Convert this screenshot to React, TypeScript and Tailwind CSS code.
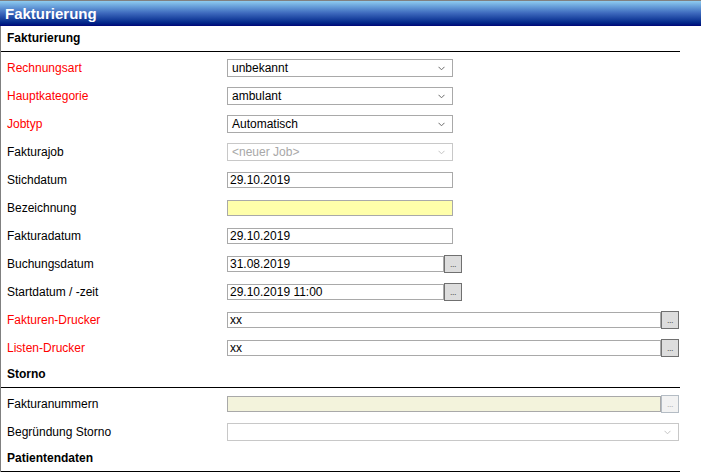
import React from "react";

const font = { fontFamily: '"Liberation Sans", Arial, sans-serif' };

function Chevron({ light }: { light?: boolean }) {
  return (
    <svg width="7" height="5" viewBox="0 0 7 5" className="shrink-0">
      <path d="M0.5 0.8 L3.5 3.8 L6.5 0.8" fill="none" stroke={light ? "#c4c4c4" : "#6a6a6a"} strokeWidth="1" />
    </svg>
  );
}

function Select({ value, disabled, wide }: { value: string; disabled?: boolean; wide?: boolean }) {
  return (
    <div
      className={`h-[18px] flex items-center justify-between pl-[4px] pr-[7px] border bg-white text-[12px] ${
        wide ? "w-[452px]" : "w-[226px]"
      } ${disabled ? "border-[#c8c8c8] text-[#a8a8a8]" : "border-[#a9a9a9] text-black"}`}
    >
      <span className="leading-none">{value}</span>
      <Chevron light={disabled} />
    </div>
  );
}

function Dots({ disabled }: { disabled?: boolean }) {
  return (
    <button
      className={`w-[18px] h-[18px] border flex items-end justify-center pb-[3px] ${
        disabled ? "bg-[#f2f2f2] border-[#b4bcc4]" : "bg-[#dddddd] border-[#707070]"
      }`}
    >
      <span className={`text-[9px] leading-none tracking-[-0.5px] ${disabled ? "text-[#b0b0b0]" : "text-[#555]"}`}>...</span>
    </button>
  );
}

function TextInput({
  value = "",
  bg = "bg-white",
  width,
}: {
  value?: string;
  bg?: string;
  width: string;
}) {
  return (
    <div className={`h-[16px] border border-[#a9a9a9] ${bg} ${width} flex items-center pl-[2px] text-[12px] text-black`}>
      <span className="leading-none">{value}</span>
    </div>
  );
}

function Row({ label, red, children }: { label: string; red?: boolean; children: React.ReactNode }) {
  return (
    <div className="h-[28px] flex items-center">
      <div className={`w-[226px] shrink-0 pl-[6px] text-[12px] ${red ? "text-[#ff0000]" : "text-black"}`}>{label}</div>
      <div className="flex items-center">{children}</div>
    </div>
  );
}

function Section({ title }: { title: string }) {
  return (
    <div className="h-[26px] border-b border-black flex items-center pl-[6px] pb-[1px] text-[12px] font-bold text-black">
      {title}
    </div>
  );
}

export default function App() {
  return (
    <div className="w-[701px] h-[472px] bg-white overflow-hidden" style={font}>
      <div className="h-[26px] border-t border-[#808080] bg-gradient-to-b from-[#8fccf0] via-[#3b66bb] to-[#000478] flex items-center pl-[5px]">
        <span className="text-white font-bold text-[15px] leading-none">Fakturierung</span>
      </div>
      <div className="border-l border-[#808080] h-[446px]">
        <div className="w-[679px]">
          <Section title="Fakturierung" />
          <div className="pt-[2px]">
            <Row label="Rechnungsart" red>
              <Select value="unbekannt" />
            </Row>
            <Row label="Hauptkategorie" red>
              <Select value="ambulant" />
            </Row>
            <Row label="Jobtyp" red>
              <Select value="Automatisch" />
            </Row>
            <Row label="Fakturajob">
              <Select value="<neuer Job>" disabled />
            </Row>
            <Row label="Stichdatum">
              <TextInput value="29.10.2019" width="w-[226px]" />
            </Row>
            <Row label="Bezeichnung">
              <TextInput bg="bg-[#ffffaa]" width="w-[226px]" />
            </Row>
            <Row label="Fakturadatum">
              <TextInput value="29.10.2019" width="w-[226px]" />
            </Row>
            <Row label="Buchungsdatum">
              <TextInput value="31.08.2019" width="w-[217px]" />
              <Dots />
            </Row>
            <Row label="Startdatum / -zeit">
              <TextInput value="29.10.2019 11:00" width="w-[217px]" />
              <Dots />
            </Row>
            <Row label="Fakturen-Drucker" red>
              <TextInput value="xx" width="w-[434px]" />
              <Dots />
            </Row>
            <Row label="Listen-Drucker" red>
              <TextInput value="xx" width="w-[434px]" />
              <Dots />
            </Row>
          </div>
          <Section title="Storno" />
          <div className="pt-[2px]">
            <Row label="Fakturanummern">
              <TextInput bg="bg-[#f3f3dc]" width="w-[434px]" />
              <Dots disabled />
            </Row>
            <Row label="Begründung Storno">
              <Select value="" disabled wide />
            </Row>
          </div>
          <Section title="Patientendaten" />
        </div>
      </div>
    </div>
  );
}
